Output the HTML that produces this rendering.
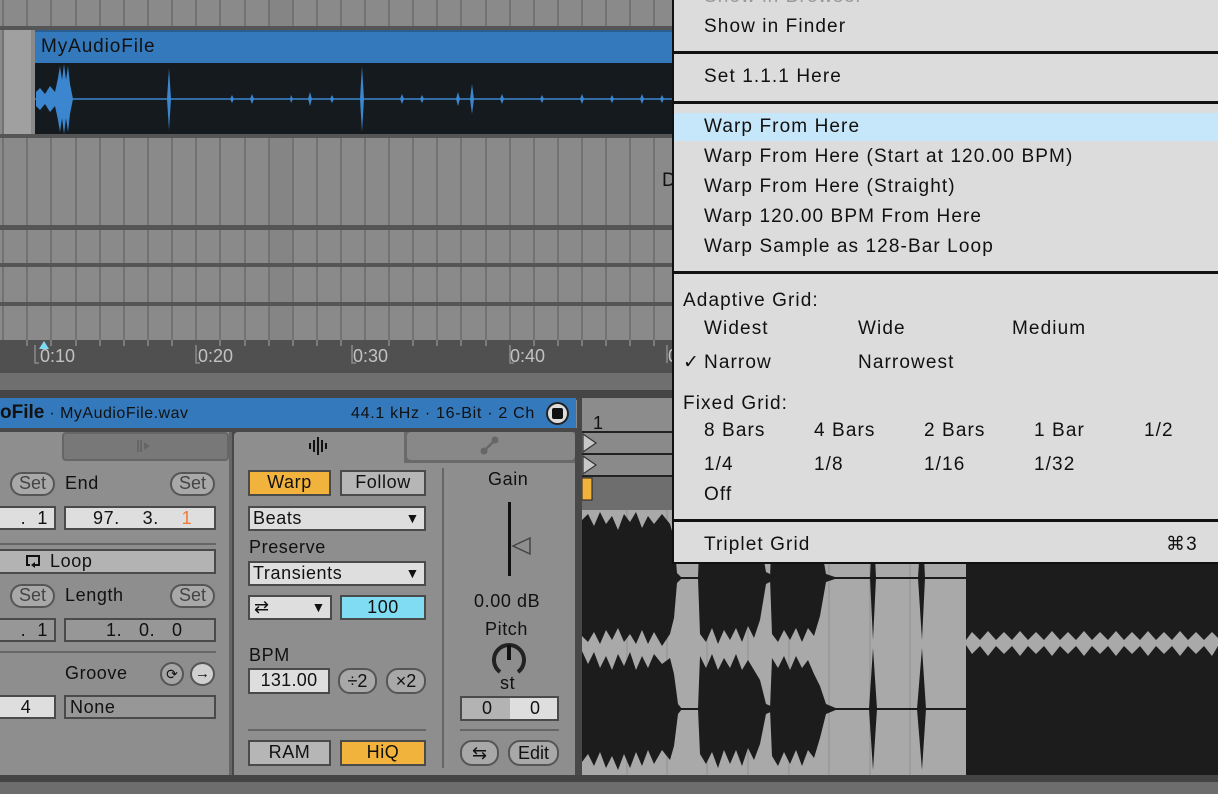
<!DOCTYPE html>
<html><head><meta charset="utf-8"><style>
*{margin:0;padding:0;box-sizing:border-box}
body{width:1218px;height:794px;overflow:hidden;background:#8a8a8a;font-family:"Liberation Sans",sans-serif;color:#111;position:relative}
.a{position:absolute}
.t{position:absolute;white-space:nowrap;font-size:18px;line-height:20px;letter-spacing:0.6px}
.btn{position:absolute;border:2px solid #4a4a4a;font-size:18px;line-height:21px;text-align:center;letter-spacing:0.6px}
.pill{position:absolute;border:2px solid #555;border-radius:12px;font-size:18px;line-height:19px;text-align:center;color:#444;background:#a8a8a8}
.fld{position:absolute;border:2px solid #4a4a4a;background:#dedede;font-size:18px;line-height:21px;letter-spacing:0.6px}
.menu .t{font-size:19px;letter-spacing:1.1px;top:1px}
.sep{position:absolute;left:672px;width:546px;height:3px;background:#111}
</style></head><body>
<svg class="a" style="left:0;top:0" width="672" height="400">
<rect width="672" height="340" fill="#8a8a8a"/>
<rect x="270" width="24" height="340" fill="#858585"/>
<g stroke="#727272" stroke-width="2">
<line x1="3" y1="0" x2="3" y2="340"/><line x1="27" y1="0" x2="27" y2="340"/><line x1="51" y1="0" x2="51" y2="340"/><line x1="76" y1="0" x2="76" y2="340"/><line x1="100" y1="0" x2="100" y2="340"/><line x1="124" y1="0" x2="124" y2="340"/><line x1="148" y1="0" x2="148" y2="340"/><line x1="172" y1="0" x2="172" y2="340"/><line x1="196" y1="0" x2="196" y2="340"/><line x1="220" y1="0" x2="220" y2="340"/><line x1="245" y1="0" x2="245" y2="340"/><line x1="269" y1="0" x2="269" y2="340"/><line x1="293" y1="0" x2="293" y2="340"/><line x1="317" y1="0" x2="317" y2="340"/><line x1="341" y1="0" x2="341" y2="340"/><line x1="365" y1="0" x2="365" y2="340"/><line x1="389" y1="0" x2="389" y2="340"/><line x1="413" y1="0" x2="413" y2="340"/><line x1="437" y1="0" x2="437" y2="340"/><line x1="461" y1="0" x2="461" y2="340"/><line x1="486" y1="0" x2="486" y2="340"/><line x1="510" y1="0" x2="510" y2="340"/><line x1="534" y1="0" x2="534" y2="340"/><line x1="558" y1="0" x2="558" y2="340"/><line x1="582" y1="0" x2="582" y2="340"/><line x1="606" y1="0" x2="606" y2="340"/><line x1="630" y1="0" x2="630" y2="340"/><line x1="654" y1="0" x2="654" y2="340"/>
</g>
<g fill="#555"><rect y="26" width="672" height="4"/><rect y="134" width="672" height="4"/><rect y="225" width="672" height="5"/><rect y="263" width="672" height="4"/><rect y="302" width="672" height="4"/></g>
<rect x="4" y="30" width="27" height="104" fill="#a0a0a0"/>
<rect x="35" y="30" width="637" height="33" fill="#3479bb"/>
<rect x="35" y="63" width="637" height="71" fill="#151a1f"/>
<rect x="35" y="30" width="637" height="2" fill="#2a5f93"/>
<line x1="35" y1="99" x2="672" y2="99" stroke="#3b86cf" stroke-width="1.5"/>
<g fill="#3b86cf">
<path d="M36 92 L40 88 L45 94 L50 86 L55 92 L58 78 L60 66 L62 80 L64 64 L66 80 L68 66 L70 84 L73 99 L70 114 L68 132 L66 118 L64 134 L62 118 L60 132 L58 120 L55 106 L50 112 L45 104 L40 110 L36 106 Z"/>
<path d="M167 99 L169 68 L171 99 L169 130 Z"/>
<path d="M360 99 L362 66 L364 99 L362 132 Z"/>
<path d="M470 99 L472 84 L474 99 L472 114 Z"/><path d="M308 99 L310 92 L312 99 L310 106 Z"/><path d="M456 99 L458 92 L460 99 L458 106 Z"/>
<path d="M230 99 l2 -4 l2 4 l-2 4 Z M250 99 l2 -5 l2 5 l-2 5 Z M290 99 l1 -4 l2 4 l-2 4 Z M330 99 l2 -4 l2 4 l-2 4 Z M400 99 l2 -5 l2 5 l-2 5 Z M420 99 l2 -4 l2 4 l-2 4 Z M500 99 l2 -5 l2 5 l-2 5 Z M540 99 l2 -4 l2 4 l-2 4 Z M580 99 l2 -5 l2 5 l-2 5 Z M610 99 l2 -4 l2 4 l-2 4 Z M640 99 l2 -5 l2 5 l-2 5 Z M660 99 l2 -4 l2 4 l-2 4 Z"/>
</g>
<rect y="340" width="672" height="33" fill="#505050"/>
<rect y="373" width="672" height="17" fill="#6f6f6f"/>
<rect y="390" width="672" height="10" fill="#454545"/>
<g stroke="#8a8a8a" stroke-width="1.5"><line x1="27" y1="340" x2="27" y2="346"/><line x1="51" y1="340" x2="51" y2="346"/><line x1="76" y1="340" x2="76" y2="346"/><line x1="100" y1="340" x2="100" y2="346"/><line x1="124" y1="340" x2="124" y2="346"/><line x1="148" y1="340" x2="148" y2="346"/><line x1="172" y1="340" x2="172" y2="346"/><line x1="220" y1="340" x2="220" y2="346"/><line x1="245" y1="340" x2="245" y2="346"/><line x1="269" y1="340" x2="269" y2="346"/><line x1="293" y1="340" x2="293" y2="346"/><line x1="317" y1="340" x2="317" y2="346"/><line x1="341" y1="340" x2="341" y2="346"/><line x1="389" y1="340" x2="389" y2="346"/><line x1="413" y1="340" x2="413" y2="346"/><line x1="437" y1="340" x2="437" y2="346"/><line x1="461" y1="340" x2="461" y2="346"/><line x1="486" y1="340" x2="486" y2="346"/><line x1="534" y1="340" x2="534" y2="346"/><line x1="558" y1="340" x2="558" y2="346"/><line x1="582" y1="340" x2="582" y2="346"/><line x1="606" y1="340" x2="606" y2="346"/><line x1="630" y1="340" x2="630" y2="346"/><line x1="654" y1="340" x2="654" y2="346"/>
<path d="M35 345 v18 h4 M196 345 v18 h4 M352 345 v18 h4 M510 345 v18 h4 M667 345 v18" fill="none"/></g>
<path d="M39 349 L44 341 L49 349 Z" fill="#7fd8f5"/>
<g fill="#c2c2c2" font-size="18" font-family="Liberation Sans"><text x="40" y="362">0:10</text><text x="198" y="362">0:20</text><text x="353" y="362">0:30</text><text x="510" y="362">0:40</text><text x="668" y="362">0</text></g>
</svg>
<div class="t" style="left:41px;top:37px;font-size:19px;letter-spacing:0.9px">MyAudioFile</div>
<div class="t" style="left:662px;top:171px;font-size:19px">D</div>

<div class="a" style="left:0;top:398px;width:576px;height:30px;background:#3479bb"></div>
<div class="t" style="left:0;top:403px;font-size:19px;font-weight:bold;letter-spacing:0">oFile<span style="font-weight:normal;font-size:16px;letter-spacing:0.5px"> · MyAudioFile.wav</span></div>
<div class="t" style="left:351px;top:404px;font-size:16px;letter-spacing:0.7px">44.1 kHz · 16-Bit · 2 Ch</div>
<div class="a" style="left:546px;top:402px;width:23px;height:23px;border-radius:50%;background:#ddd;border:2px solid #222"><div class="a" style="left:4px;top:4px;width:11px;height:11px;background:#111;border-radius:2px"></div></div>

<div class="a" style="left:0;top:428px;width:582px;height:347px;background:#484848"></div>
<div class="a" style="left:0;top:432px;width:229px;height:343px;background:#8e8e8e"></div>
<div class="a" style="left:62px;top:432px;width:167px;height:29px;background:#787878;border:2px solid #666;border-radius:4px"></div>
<svg class="a" style="left:135px;top:437px" width="20" height="18"><rect x="2" y="3" width="2" height="12" fill="#666"/><rect x="5" y="3" width="2" height="12" fill="#666"/><path d="M9 5 L15 9 L9 13 Z" fill="#666"/></svg>
<div class="a" style="left:234px;top:432px;width:341px;height:343px;background:#8e8e8e;border-radius:4px 4px 0 0"></div>
<div class="a" style="left:404px;top:432px;width:171px;height:31px;background:#6a6a6a"></div>
<div class="a" style="left:407px;top:432px;width:168px;height:28px;background:#888;border-radius:4px"></div>
<svg class="a" style="left:306px;top:435px" width="24" height="22"><g stroke="#111" stroke-width="2"><line x1="4" y1="8" x2="4" y2="14"/><line x1="8" y1="5" x2="8" y2="17"/><line x1="12" y1="2" x2="12" y2="20"/><line x1="16" y1="5" x2="16" y2="17"/><line x1="20" y1="8" x2="20" y2="14"/></g></svg>
<svg class="a" style="left:478px;top:433px" width="24" height="24"><line x1="6" y1="18" x2="17" y2="7" stroke="#666" stroke-width="2.5"/><circle cx="6" cy="18" r="3.5" fill="#666"/><circle cx="17" cy="7" r="3.5" fill="#666"/></svg>

<div class="pill" style="left:10px;top:472px;width:45px;height:24px">Set</div>
<div class="t" style="left:65px;top:473px">End</div>
<div class="pill" style="left:170px;top:472px;width:45px;height:24px">Set</div>
<div class="fld" style="left:-4px;top:506px;width:60px;height:24px;text-align:right;padding-right:6px">.&nbsp;&nbsp;1</div>
<div class="fld" style="left:64px;top:506px;width:152px;height:24px;padding-left:27px;word-spacing:2px">97.&nbsp;&nbsp;&nbsp;3.&nbsp;&nbsp;&nbsp;<span style="color:#f07a3a">1</span></div>
<div class="a" style="left:0;top:543px;width:216px;height:2px;background:#666"></div>
<div class="btn" style="left:-4px;top:549px;width:220px;height:25px;background:#b3b3b3"></div>
<svg class="a" style="left:24px;top:553px" width="18" height="18"><path d="M6 12 H3 V3 H15 V12 H9" fill="none" stroke="#111" stroke-width="2"/><path d="M11 9 L7 12 L11 15 Z" fill="#111"/></svg>
<div class="t" style="left:50px;top:551px">Loop</div>
<div class="pill" style="left:10px;top:584px;width:45px;height:24px">Set</div>
<div class="t" style="left:65px;top:585px">Length</div>
<div class="pill" style="left:170px;top:584px;width:45px;height:24px">Set</div>
<div class="fld" style="left:-4px;top:618px;width:60px;height:24px;text-align:right;padding-right:6px;background:#979797">.&nbsp;&nbsp;1</div>
<div class="fld" style="left:64px;top:618px;width:152px;height:24px;padding-left:40px;background:#979797">1.&nbsp;&nbsp;&nbsp;0.&nbsp;&nbsp;&nbsp;0</div>
<div class="a" style="left:0;top:651px;width:216px;height:2px;background:#666"></div>
<div class="t" style="left:65px;top:663px">Groove</div>
<div class="a" style="left:160px;top:662px;width:24px;height:24px;border-radius:50%;border:2px solid #555;background:#a5a5a5;font-size:14px;text-align:center;line-height:20px">&#x27F3;</div>
<div class="a" style="left:190px;top:662px;width:25px;height:24px;border-radius:50%;border:2px solid #555;background:#d0d0d0;font-size:15px;text-align:center;line-height:20px;font-weight:bold">&#x2192;</div>
<div class="fld" style="left:-4px;top:695px;width:60px;height:24px;text-align:center">4</div>
<div class="fld" style="left:64px;top:695px;width:152px;height:24px;padding-left:4px;background:#979797">None</div>
<div class="a" style="left:229px;top:432px;width:3px;height:343px;background:#666"></div>

<div class="btn" style="left:248px;top:470px;width:83px;height:26px;background:#f2b33d">Warp</div>
<div class="btn" style="left:340px;top:470px;width:86px;height:26px;background:#b6b6b6">Follow</div>
<div class="fld" style="left:248px;top:506px;width:178px;height:25px;padding-left:3px">Beats<span style="position:absolute;right:4px;font-size:14px">&#9660;</span></div>
<div class="t" style="left:249px;top:537px">Preserve</div>
<div class="fld" style="left:248px;top:561px;width:178px;height:25px;padding-left:3px">Transients<span style="position:absolute;right:4px;font-size:14px">&#9660;</span></div>
<div class="fld" style="left:248px;top:595px;width:84px;height:25px;padding-left:4px">&#8644;<span style="position:absolute;right:4px;font-size:14px">&#9660;</span></div>
<div class="fld" style="left:340px;top:595px;width:86px;height:25px;background:#80dcf2;text-align:center">100</div>
<div class="t" style="left:249px;top:645px">BPM</div>
<div class="fld" style="left:248px;top:668px;width:82px;height:26px;text-align:center;letter-spacing:0.3px">131.00</div>
<div class="pill" style="left:338px;top:668px;width:39px;height:26px;color:#111;line-height:22px">÷2</div>
<div class="pill" style="left:386px;top:668px;width:40px;height:26px;color:#111;line-height:22px">×2</div>
<div class="a" style="left:248px;top:729px;width:178px;height:2px;background:#666"></div>
<div class="btn" style="left:248px;top:740px;width:83px;height:26px;background:#b6b6b6">RAM</div>
<div class="btn" style="left:340px;top:740px;width:86px;height:26px;background:#f2b33d">HiQ</div>
<div class="a" style="left:442px;top:468px;width:2px;height:300px;background:#666"></div>
<div class="t" style="left:488px;top:469px">Gain</div>
<div class="a" style="left:508px;top:502px;width:3px;height:74px;background:#111"></div>
<svg class="a" style="left:511px;top:535px" width="22" height="22"><path d="M2 11 L19 3 L19 19 Z" fill="#8e8e8e" stroke="#444" stroke-width="1.5"/></svg>
<div class="t" style="left:474px;top:591px">0.00 dB</div>
<div class="t" style="left:485px;top:619px">Pitch</div>
<svg class="a" style="left:489px;top:640px" width="40" height="40"><path d="M11 32 A15 15 0 1 1 29 32" fill="none" stroke="#222" stroke-width="4"/><line x1="20" y1="5" x2="20" y2="20" stroke="#111" stroke-width="4"/></svg>
<div class="t" style="left:500px;top:673px">st</div>
<div class="fld" style="left:460px;top:696px;width:99px;height:25px;background:#dedede"><div class="a" style="left:0;top:0;width:48px;height:21px;background:#b3b3b3"></div><span class="a" style="left:20px;top:0">0</span><span class="a" style="left:68px;top:0">0</span></div>
<div class="a" style="left:460px;top:729px;width:99px;height:2px;background:#666"></div>
<div class="pill" style="left:460px;top:740px;width:39px;height:26px;color:#111;line-height:22px">&#8646;</div>
<div class="pill" style="left:508px;top:740px;width:51px;height:26px;color:#111;line-height:22px">Edit</div>

<svg class="a" style="left:582px;top:398px" width="636" height="377">
<rect width="636" height="377" fill="#a9a9a9"/>
<rect width="636" height="34" fill="#8c8c8c"/>
<rect y="34" width="636" height="44" fill="#8a8a8a"/>
<rect y="78" width="636" height="34" fill="#6e6e6e"/>
<g stroke="#222" stroke-width="2"><line x1="0" y1="34" x2="636" y2="34"/><line x1="0" y1="56" x2="636" y2="56"/><line x1="0" y1="78" x2="636" y2="78"/></g>
<path d="M1 36 L14 45 L1 54 Z M1 58 L14 67 L1 76 Z" fill="#c8c8c8" stroke="#333" stroke-width="1.2"/>
<rect x="0" y="80" width="10" height="22" fill="#f2b33d" stroke="#222"/>
<text x="11" y="31" font-size="18" font-family="Liberation Sans" fill="#111">1</text>
<g stroke="#999" stroke-width="1.5"><line x1="45" y1="112" x2="45" y2="377"/><line x1="85" y1="112" x2="85" y2="377"/><line x1="125" y1="112" x2="125" y2="377"/><line x1="166" y1="112" x2="166" y2="377"/><line x1="207" y1="112" x2="207" y2="377"/><line x1="247" y1="112" x2="247" y2="377"/><line x1="288" y1="112" x2="288" y2="377"/><line x1="328" y1="112" x2="328" y2="377"/></g>
<g stroke="#1c1c1c" stroke-width="2"><line x1="0" y1="180" x2="636" y2="180"/><line x1="0" y1="311" x2="636" y2="311"/></g>
<g fill="#1c1c1c">
<path d="M0 122 L6 116 L12 128 L18 114 L24 126 L30 118 L36 132 L42 116 L48 124 L54 114 L60 130 L66 118 L72 126 L80 116 L88 126 L92 140 L95 175 L100 180 L95 185 L92 220 L88 236 L80 248 L72 234 L66 246 L60 232 L54 246 L48 236 L42 244 L36 230 L30 242 L24 232 L18 246 L12 234 L6 244 L0 238 Z"/>
<path d="M0 253 L6 266 L12 254 L18 270 L24 258 L30 272 L36 256 L42 268 L48 254 L54 272 L60 258 L66 270 L72 256 L80 266 L88 260 L92 276 L96 306 L100 311 L96 316 L92 348 L88 362 L80 352 L72 366 L66 352 L60 368 L54 354 L48 370 L42 356 L36 372 L30 358 L24 370 L18 354 L12 368 L6 356 L0 364 Z"/>
<path d="M118 126 L124 116 L130 132 L136 114 L142 128 L148 118 L154 132 L160 116 L166 130 L172 120 L178 140 L184 174 L196 180 L184 186 L178 222 L172 240 L166 228 L160 244 L154 230 L148 242 L142 232 L136 246 L130 230 L124 244 L118 236 L116 180 Z"/>
<path d="M118 258 L124 270 L130 256 L136 272 L142 260 L148 270 L154 256 L160 272 L166 262 L172 272 L178 282 L184 306 L196 311 L184 316 L178 346 L172 362 L166 350 L160 368 L154 352 L148 366 L142 352 L136 370 L130 354 L124 366 L118 356 L116 311 Z"/>
<path d="M190 124 L196 116 L202 130 L208 118 L214 132 L220 116 L226 128 L232 122 L238 142 L244 176 L256 180 L244 184 L238 218 L232 238 L226 230 L220 244 L214 230 L208 242 L202 232 L196 244 L190 236 L188 180 Z"/>
<path d="M190 260 L196 270 L202 258 L208 272 L214 258 L220 270 L226 262 L232 276 L238 288 L244 306 L256 311 L244 316 L238 340 L232 360 L226 352 L220 368 L214 352 L208 366 L202 354 L196 368 L190 358 L188 311 Z"/>
<path d="M288 180 L291 118 L294 180 L291 242 Z M287 311 L291 250 L295 311 L291 372 Z"/>
<path d="M336 180 L340 118 L343 180 L340 242 Z M335 311 L340 250 L344 311 L340 372 Z"/>
<path d="M384 112 L636 112 L636 240 L630 234 L622 242 L614 234 L606 242 L598 233 L590 242 L582 234 L574 242 L566 233 L558 242 L550 234 L542 242 L534 233 L526 242 L518 234 L510 242 L502 233 L494 242 L486 234 L478 242 L470 233 L462 242 L454 234 L446 242 L438 233 L430 242 L422 234 L414 242 L406 233 L398 242 L390 234 L384 242 Z"/>
<path d="M384 247 L390 256 L398 248 L406 258 L414 248 L422 256 L430 248 L438 258 L446 248 L454 256 L462 248 L470 258 L478 248 L486 256 L494 248 L502 258 L510 248 L518 256 L526 248 L534 258 L542 248 L550 256 L558 248 L566 258 L574 248 L582 256 L590 248 L598 258 L606 248 L614 256 L622 248 L630 258 L636 248 L636 377 L384 377 Z"/>
</g>
</svg>
<div class="a" style="left:577px;top:398px;width:5px;height:377px;background:#484848"></div>

<div class="a" style="left:0;top:775px;width:1218px;height:7px;background:#444"></div>
<div class="a" style="left:0;top:782px;width:1218px;height:12px;background:#6d6d6d"></div>

<div class="menu">
<div class="a" style="left:672px;top:0;width:546px;height:564px;background:#dcdcdc;border-left:2px solid #111;border-bottom:2px solid #111"></div>
<div class="a" style="left:674px;top:113px;width:544px;height:28px;background:#c6e6fa"></div>
<div class="sep" style="top:51px"></div>
<div class="sep" style="top:101px"></div>
<div class="sep" style="top:271px"></div>
<div class="sep" style="top:519px"></div>
<div class="t" style="left:704px;top:-13px;color:#999">Show in Browser</div>
<div class="t" style="left:704px;top:17px">Show in Finder</div>
<div class="t" style="left:704px;top:67px">Set 1.1.1 Here</div>
<div class="t" style="left:704px;top:117px">Warp From Here</div>
<div class="t" style="left:704px;top:147px">Warp From Here (Start at 120.00 BPM)</div>
<div class="t" style="left:704px;top:177px">Warp From Here (Straight)</div>
<div class="t" style="left:704px;top:207px">Warp 120.00 BPM From Here</div>
<div class="t" style="left:704px;top:237px">Warp Sample as 128-Bar Loop</div>
<div class="t" style="left:683px;top:291px">Adaptive Grid:</div>
<div class="t" style="left:704px;top:319px">Widest</div>
<div class="t" style="left:858px;top:319px">Wide</div>
<div class="t" style="left:1012px;top:319px">Medium</div>
<div class="t" style="left:683px;top:353px">&#x2713;</div>
<div class="t" style="left:704px;top:353px">Narrow</div>
<div class="t" style="left:858px;top:353px">Narrowest</div>
<div class="t" style="left:683px;top:394px">Fixed Grid:</div>
<div class="t" style="left:704px;top:421px">8 Bars</div>
<div class="t" style="left:814px;top:421px">4 Bars</div>
<div class="t" style="left:924px;top:421px">2 Bars</div>
<div class="t" style="left:1034px;top:421px">1 Bar</div>
<div class="t" style="left:1144px;top:421px">1/2</div>
<div class="t" style="left:704px;top:455px">1/4</div>
<div class="t" style="left:814px;top:455px">1/8</div>
<div class="t" style="left:924px;top:455px">1/16</div>
<div class="t" style="left:1034px;top:455px">1/32</div>
<div class="t" style="left:704px;top:485px">Off</div>
<div class="t" style="left:704px;top:535px">Triplet Grid</div>
<div class="t" style="left:1166px;top:535px">&#x2318;3</div>
</div>
</body></html>
